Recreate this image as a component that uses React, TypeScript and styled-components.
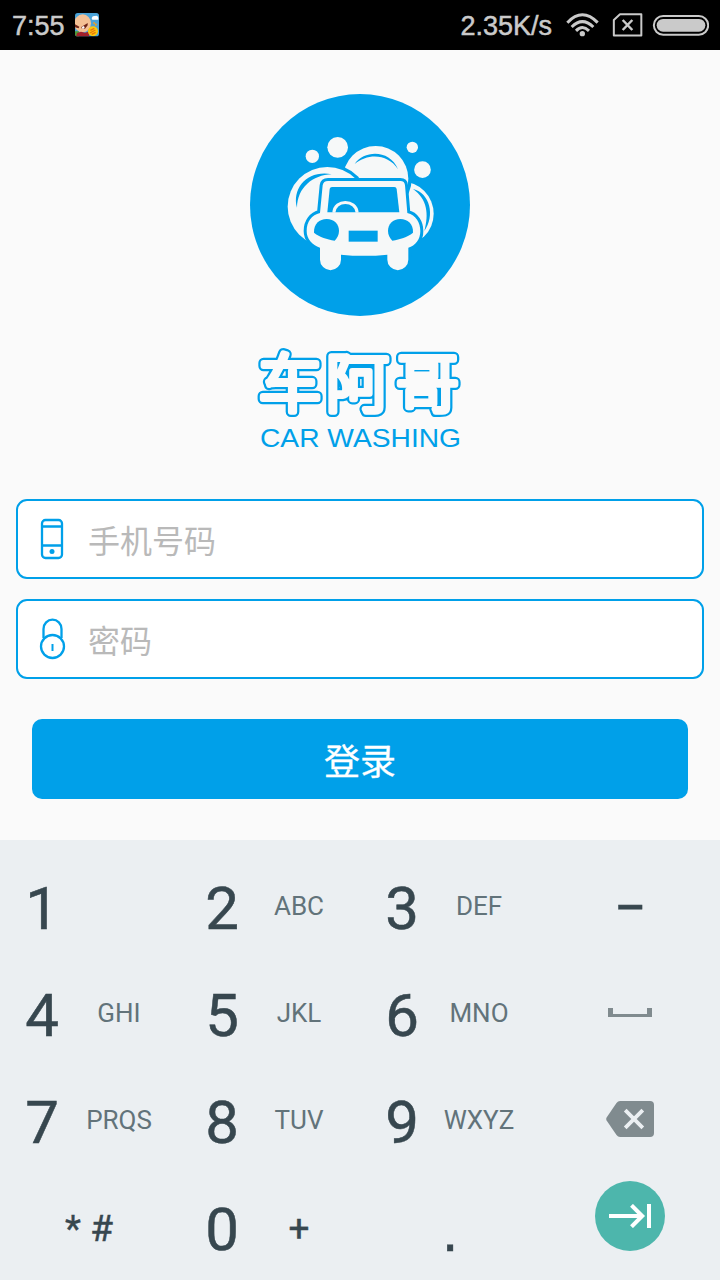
import React from 'react';
import styled, { createGlobalStyle } from 'styled-components';

const BLUE = '#00a0e9';
const PAGE = '#fafafa';
const STATUS = '#cacaca';
const INK = '#37474f';
const MUTED = '#808b8f';

const GlobalStyle = createGlobalStyle`
  * { box-sizing: border-box; }
  body { margin: 0; background: ${PAGE}; }
  svg { display: block; }
`;

const Screen = styled.div`
  width: 720px;
  height: 1280px;
  overflow: hidden;
  display: flex;
  flex-direction: column;
  background: ${PAGE};
  font-family: 'Noto Sans CJK SC', sans-serif;
`;

const StatusBar = styled.header`
  height: 50px;
  flex: none;
  display: flex;
  align-items: center;
  padding: 0 11px 0 12px;
  background: #000;
  color: ${STATUS};
  font: 27px/50px 'Liberation Sans', sans-serif;
  -webkit-text-stroke: 0.5px ${STATUS};
`;

const Clock = styled.span`
  margin: 2px 10px 0 0;
  width: 53px;
`;

const NetSpeed = styled.span`
  margin: 2px 14px 0 auto;
`;

const StatusIcons = styled.div`
  display: flex;
  align-items: center;
`;

const Main = styled.main`
  height: 790px;
  flex: none;
  display: flex;
  flex-direction: column;
  align-items: center;
  padding: 44px 16px 0;
`;

const Wordmark = styled.svg`
  flex: none;
  margin-top: 4px;
  font-family: 'Noto Sans CJK SC', sans-serif;
`;

const Form = styled.form`
  width: 100%;
  margin-top: 39px;
  display: flex;
  flex-direction: column;
  gap: 20px;
`;

const Field = styled.label`
  height: 80px;
  display: flex;
  align-items: center;
  padding-left: 18px;
  gap: 20px;
  border: 2px solid ${BLUE};
  border-radius: 11px;
  background: #fff;
`;

const Input = styled.input`
  flex: 1;
  min-width: 0;
  height: 70px;
  padding: 0 0 1px;
  border: 0;
  outline: 0;
  background: transparent;
  font: 32px 'Noto Sans CJK SC', sans-serif;
  color: #333;
  &::placeholder { color: #b9b9b9; opacity: 1; }
`;

const LoginButton = styled.button`
  height: 80px;
  margin: 20px 16px 0;
  padding: 0;
  border: 0;
  border-radius: 10px;
  background: ${BLUE};
  color: #fff;
  font: 400 36px 'Noto Sans CJK SC', sans-serif;
  -webkit-text-stroke: 0.3px #fff;
`;

const Keyboard = styled.section`
  flex: 1;
  min-height: 0;
  padding-top: 14px;
  display: grid;
  grid-template-columns: repeat(4, 180px);
  grid-template-rows: repeat(4, 107px);
  background: #ebeff2;
  color: ${INK};
  font-family: Roboto, sans-serif;
`;

const Key = styled.div`
  display: flex;
  align-items: center;
  padding-left: 25px;
`;

const ActionKey = styled.div<{ $lift?: number }>`
  display: flex;
  align-items: center;
  justify-content: center;
  padding-bottom: ${p => p.$lift ?? 0}px;
`;

const Digit = styled.span`
  width: 34px;
  padding-top: 2px;
  text-align: center;
  font-size: 60px;
  line-height: 107px;
  -webkit-text-stroke: 0.5px ${INK};
`;

const Letters = styled.span`
  width: 118px;
  margin: -4px 0 0 1px;
  text-align: center;
  font-size: 26px;
  color: #62737a;
`;

const Symbol = styled.span<{ $size: number; $width: number; $drop?: number }>`
  width: ${p => p.$width}px;
  padding-top: ${p => p.$drop ?? 0}px;
  text-align: center;
  white-space: pre;
  font-size: ${p => p.$size}px;
  line-height: 1;
  -webkit-text-stroke: 0.4px ${INK};
`;

const Period = styled(Symbol)`
  font-family: 'Liberation Sans', sans-serif;
`;

const EnterKey = styled.div`
  width: 70px;
  height: 70px;
  display: flex;
  align-items: center;
  justify-content: center;
  border-radius: 50%;
  background: #4db6ac;
`;

const AppBadge = () => (
  <svg width="24" height="24" viewBox="0 0 72 72">
    <defs><clipPath id="badge"><rect width="72" height="70" rx="8" /></clipPath></defs>
    <g clipPath="url(#badge)">
      <rect width="72" height="72" fill="#4aa3d8" />
      <path d="M50 16q2-9 10-7q8-3 10 5v6H52z" fill="#fff" />
      <path d="M0 55h12v17H0z" fill="#4f9a35" />
      <ellipse cx="23" cy="31" rx="25" ry="27" fill="#f4c195" />
      <path d="M0 34l13 7l-2 5L0 43zM19 42l19-12v7l-8 10l-11-1z" fill="#6e2418" />
      <path d="M20 42l7-3l2 6l-6 3z" fill="#fff" />
      <path d="M6 60l12-4l12 3l10-3l4 16H3z" fill="#a3202b" />
      <circle cx="54" cy="55" r="15" fill="#fbc70c" />
      <path d="M46 52l12-6M45 60l16-9M50 64l12-6" stroke="#e8770c" strokeWidth="4" />
      <path d="M56 28l3 5M64 32l-3 6" stroke="#f0a020" strokeWidth="5" />
    </g>
  </svg>
);

const SignalIcons = () => (
  <svg width="143" height="24" viewBox="378 38 429 72" fill="none" stroke={STATUS}>
    <g strokeWidth="9">
      <path d="M382 67Q427 20 473 67" />
      <path d="M395 80Q427 48 460 80" />
      <path d="M408 91.500Q427 72 447 91.500" />
    </g>
    <circle cx="427" cy="100" r="8" fill={STATUS} stroke="none" />
    <path d="M540 41.500H604V105.500H521.500V59Z" strokeWidth="6" strokeLinejoin="round" />
    <path d="M548 59L577 89M577 59L548 89" strokeWidth="7.500" />
    <rect x="641.500" y="47" width="163" height="56" rx="28" strokeWidth="6" />
    <rect x="650" y="56" width="146" height="38" rx="19" fill={STATUS} stroke="none" />
  </svg>
);

const CAR_BODY =
  'M264 288H481Q494 288 495 301L502 384C528 390 541 414 541 438C541 464 526 482 505 488V524a31.500 31.500 0 0 1-63 0V509Q372 516 303 509V524a31.500 31.500 0 0 1-63 0V488C216 480 200 462 200 438C200 410 215 390 240 384L248 301Q250 288 264 288Z';
const HEADLIGHT =
  'M222 443C221 417 238 402 260 402C283 402 297 418 297 438C297 450 291 461 284 467C260 463 240 457 222 443Z';

const CarLogo = () => (
  <svg width="220" height="222" viewBox="30 27 660 666" fill="#f6f8f8">
    <ellipse cx="360" cy="360" rx="330" ry="333" fill={BLUE} />
    <circle cx="217" cy="214" r="20" />
    <circle cx="293" cy="187" r="31" />
    <circle cx="517" cy="187" r="17" />
    <circle cx="547.500" cy="254" r="25" />
    <circle cx="485" cy="386" r="96" />
    <circle cx="407" cy="281" r="108" fill={BLUE} />
    <circle cx="407" cy="281" r="98" />
    <circle cx="262" cy="365" r="129" fill={BLUE} />
    <circle cx="262" cy="365" r="119" />
    <g fill={BLUE}>
      <path d="M171 368C155 308 205 254 275 268C218 270 172 308 171 368Z" />
      <path d="M344 237C374 194 450 194 474 253C444 206 384 204 344 237Z" />
      <path d="M519 312C570 324 586 392 553 438C567 388 562 342 519 312Z" />
      <path d={CAR_BODY} stroke={BLUE} strokeWidth="18" />
    </g>
    <path d={CAR_BODY} />
    <g fill={BLUE}>
      <path d="M276 306H463Q469 306 470 312L478 382H262L269 312Q270 306 276 306Z" />
      <path d={HEADLIGHT} />
      <path d={HEADLIGHT} transform="matrix(-1 0 0 1 741 0)" />
      <rect x="326" y="437" width="87" height="33" />
    </g>
    <path d="M281.500 383C284 342 348 342 351.500 383" fill="none" stroke="#f6f8f8" strokeWidth="9" />
  </svg>
);

const BrandName = () => (
  <Wordmark width="220" height="140" viewBox="250 320 220 140">
    <g fontSize="63" fontWeight="300" strokeLinejoin="round" fill={BLUE} stroke={BLUE} strokeWidth="10.500">
      <text id="brand" x="258.500 326 396" y="405.500">车阿哥</text>
    </g>
    <use href="#brand" fontSize="63" fontWeight="300" strokeLinejoin="round" fill={PAGE} stroke={PAGE} strokeWidth="6" />
    <text
      x="260" y="447" fontFamily="'Liberation Sans', sans-serif" fontSize="25.500"
      textLength="201" lengthAdjust="spacingAndGlyphs" fill={BLUE}
    >CAR WASHING</text>
  </Wordmark>
);

const PhoneIcon = () => (
  <svg width="32" height="42" viewBox="0 0 32 42" fill="none" stroke={BLUE} strokeWidth="2.300">
    <rect x="6" y="2" width="20" height="38" rx="3.500" />
    <path d="M6 8.500H26M6 27.500H26" />
    <circle cx="16" cy="33.500" r="2.500" fill={BLUE} stroke="none" />
  </svg>
);

const LockIcon = () => (
  <svg width="32" height="42" viewBox="0 0 32 42" fill="none" stroke={BLUE} strokeWidth="2.300">
    <path d="M7.500 20V11a9 9.300 0 0 1 18 0V20" />
    <circle cx="16.500" cy="28.500" r="11.500" />
    <path d="M16.500 26V33" strokeWidth="2" />
  </svg>
);

const SpaceIcon = () => (
  <svg width="44" height="9" viewBox="0 0 44 9">
    <path d="M0 0H5V6H39V0H44V9H0Z" fill={MUTED} />
  </svg>
);

const BackspaceIcon = () => (
  <svg width="48" height="36" viewBox="0 0 48 36">
    <path d="M14 0H44Q48 0 48 4V32Q48 36 44 36H14Q12 36 10.500 34L.6 19.500Q-.2 18 .6 16.500L10.500 2Q12 0 14 0Z" fill={MUTED} />
    <path d="M19.200 9.200L36.800 26.800M36.800 9.200L19.200 26.800" stroke="#ebeff2" strokeWidth="3.800" />
  </svg>
);

const TabIcon = () => (
  <svg width="42" height="24" viewBox="0 0 42 24" fill="none" stroke="#fff" strokeWidth="4">
    <path d="M0 12H34M22.500 1.300L33.200 12L22.500 22.700M40 0V24" />
  </svg>
);

const NumberKey = ({ digit, letters }: { digit: string; letters?: string }) => (
  <Key>
    <Digit>{digit}</Digit>
    {letters && <Letters>{letters}</Letters>}
  </Key>
);

export default function App() {
  return (
    <Screen>
      <GlobalStyle />
      <StatusBar>
        <Clock>7:55</Clock>
        <AppBadge />
        <NetSpeed>2.35K/s</NetSpeed>
        <StatusIcons><SignalIcons /></StatusIcons>
      </StatusBar>
      <Main>
        <CarLogo />
        <BrandName />
        <Form>
          <Field><PhoneIcon /><Input type="tel" placeholder="手机号码" /></Field>
          <Field><LockIcon /><Input type="password" placeholder="密码" /></Field>
          <LoginButton type="button">登录</LoginButton>
        </Form>
      </Main>
      <Keyboard>
        <NumberKey digit="1" />
        <NumberKey digit="2" letters="ABC" />
        <NumberKey digit="3" letters="DEF" />
        <ActionKey><Symbol $size={58} $width={60}>−</Symbol></ActionKey>
        <NumberKey digit="4" letters="GHI" />
        <NumberKey digit="5" letters="JKL" />
        <NumberKey digit="6" letters="MNO" />
        <ActionKey $lift={4}><SpaceIcon /></ActionKey>
        <NumberKey digit="7" letters="PRQS" />
        <NumberKey digit="8" letters="TUV" />
        <NumberKey digit="9" letters="WXYZ" />
        <ActionKey $lift={5}><BackspaceIcon /></ActionKey>
        <Key><Symbol $size={37} $width={128}>* #</Symbol></Key>
        <Key><Digit>0</Digit><Symbol $size={37} $width={120}>+</Symbol></Key>
        <ActionKey><Period $size={60} $width={60} $drop={4}>.</Period></ActionKey>
        <ActionKey $lift={25}><EnterKey><TabIcon /></EnterKey></ActionKey>
      </Keyboard>
    </Screen>
  );
}
